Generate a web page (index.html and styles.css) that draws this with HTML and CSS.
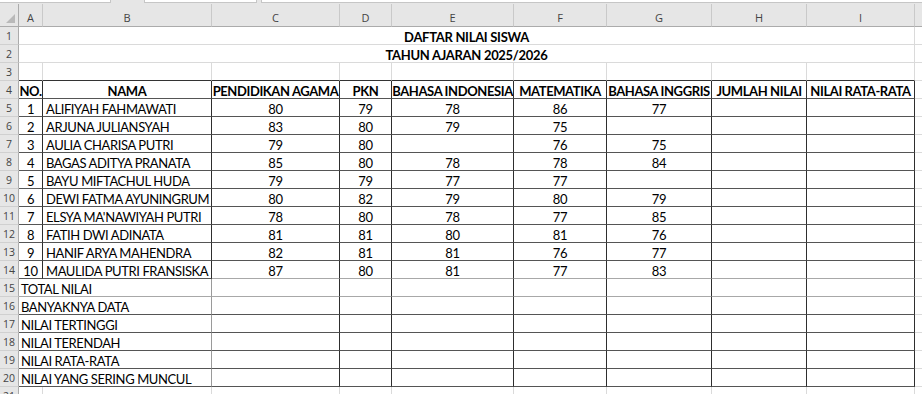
FILE: index.html
```html
<!DOCTYPE html>
<html lang="id">
<head>
<meta charset="utf-8">
<title>Daftar Nilai Siswa</title>
<link rel="stylesheet" href="styles.css">
</head>
<body>
<div class="app">
  <div class="topstrip">
    <div class="box b1"></div>
    <div class="box b2"></div>
    <div class="box b3"></div>
  </div>
  <div class="sheet">
    <!-- column headers -->
    <div class="corner"><span class="tri"></span></div>
    <div class="ch">A</div>
    <div class="ch">B</div>
    <div class="ch">C</div>
    <div class="ch">D</div>
    <div class="ch">E</div>
    <div class="ch">F</div>
    <div class="ch">G</div>
    <div class="ch">H</div>
    <div class="ch">I</div>
    <div class="ch last"></div>

    <!-- row 1 -->
    <div class="rh">1</div>
    <div class="c title span9">DAFTAR NILAI SISWA</div>
    <div class="c"></div>
    <!-- row 2 -->
    <div class="rh">2</div>
    <div class="c title span9">TAHUN AJARAN 2025/2026</div>
    <div class="c"></div>
    <!-- row 3 -->
    <div class="rh">3</div>
    <div class="c top"></div><div class="c top"></div><div class="c top"></div><div class="c top"></div><div class="c top"></div><div class="c top"></div><div class="c top"></div><div class="c top"></div><div class="c top"></div>
    <div class="c"></div>
    <!-- row 4 -->
    <div class="rh">4</div>
    <div class="c t hd">NO.</div>
    <div class="c t hd">NAMA</div>
    <div class="c t hd">PENDIDIKAN AGAMA</div>
    <div class="c t hd">PKN</div>
    <div class="c t hd">BAHASA INDONESIA</div>
    <div class="c t hd">MATEMATIKA</div>
    <div class="c t hd">BAHASA INGGRIS</div>
    <div class="c t hd">JUMLAH NILAI</div>
    <div class="c t hd">NILAI RATA-RATA</div>
    <div class="c"></div>

    <!-- row 5 -->
    <div class="rh">5</div>
    <div class="c t n">1</div><div class="c t nm">ALIFIYAH FAHMAWATI</div>
    <div class="c t n">80</div><div class="c t n">79</div><div class="c t n">78</div><div class="c t n">86</div><div class="c t n">77</div><div class="c t"></div><div class="c t"></div>
    <div class="c"></div>
    <!-- row 6 -->
    <div class="rh">6</div>
    <div class="c t n">2</div><div class="c t nm">ARJUNA JULIANSYAH</div>
    <div class="c t n">83</div><div class="c t n">80</div><div class="c t n">79</div><div class="c t n">75</div><div class="c t n"></div><div class="c t"></div><div class="c t"></div>
    <div class="c"></div>
    <!-- row 7 -->
    <div class="rh">7</div>
    <div class="c t n">3</div><div class="c t nm">AULIA CHARISA PUTRI</div>
    <div class="c t n">79</div><div class="c t n">80</div><div class="c t n"></div><div class="c t n">76</div><div class="c t n">75</div><div class="c t"></div><div class="c t"></div>
    <div class="c"></div>
    <!-- row 8 -->
    <div class="rh">8</div>
    <div class="c t n">4</div><div class="c t nm">BAGAS ADITYA PRANATA</div>
    <div class="c t n">85</div><div class="c t n">80</div><div class="c t n">78</div><div class="c t n">78</div><div class="c t n">84</div><div class="c t"></div><div class="c t"></div>
    <div class="c"></div>
    <!-- row 9 -->
    <div class="rh">9</div>
    <div class="c t n">5</div><div class="c t nm">BAYU MIFTACHUL HUDA</div>
    <div class="c t n">79</div><div class="c t n">79</div><div class="c t n">77</div><div class="c t n">77</div><div class="c t n"></div><div class="c t"></div><div class="c t"></div>
    <div class="c"></div>
    <!-- row 10 -->
    <div class="rh">10</div>
    <div class="c t n">6</div><div class="c t nm">DEWI FATMA AYUNINGRUM</div>
    <div class="c t n">80</div><div class="c t n">82</div><div class="c t n">79</div><div class="c t n">80</div><div class="c t n">79</div><div class="c t"></div><div class="c t"></div>
    <div class="c"></div>
    <!-- row 11 -->
    <div class="rh">11</div>
    <div class="c t n">7</div><div class="c t nm">ELSYA MA'NAWIYAH PUTRI</div>
    <div class="c t n">78</div><div class="c t n">80</div><div class="c t n">78</div><div class="c t n">77</div><div class="c t n">85</div><div class="c t"></div><div class="c t"></div>
    <div class="c"></div>
    <!-- row 12 -->
    <div class="rh">12</div>
    <div class="c t n">8</div><div class="c t nm">FATIH DWI ADINATA</div>
    <div class="c t n">81</div><div class="c t n">81</div><div class="c t n">80</div><div class="c t n">81</div><div class="c t n">76</div><div class="c t"></div><div class="c t"></div>
    <div class="c"></div>
    <!-- row 13 -->
    <div class="rh">13</div>
    <div class="c t n">9</div><div class="c t nm">HANIF ARYA MAHENDRA</div>
    <div class="c t n">82</div><div class="c t n">81</div><div class="c t n">81</div><div class="c t n">76</div><div class="c t n">77</div><div class="c t"></div><div class="c t"></div>
    <div class="c"></div>
    <!-- row 14 -->
    <div class="rh">14</div>
    <div class="c t n">10</div><div class="c t nm">MAULIDA PUTRI FRANSISKA</div>
    <div class="c t n soft">87</div><div class="c t n soft">80</div><div class="c t n soft">81</div><div class="c t n soft">77</div><div class="c t n soft">83</div><div class="c t soft"></div><div class="c t soft"></div>
    <div class="c"></div>

    <!-- row 15 -->
    <div class="rh">15</div>
    <div class="c t lbl span2 soft">TOTAL NILAI</div>
    <div class="c t soft"></div><div class="c t soft"></div><div class="c t soft"></div><div class="c t soft"></div><div class="c t soft"></div><div class="c t soft"></div><div class="c t soft"></div>
    <div class="c"></div>
    <!-- row 16 -->
    <div class="rh">16</div>
    <div class="c t lbl span2">BANYAKNYA DATA</div>
    <div class="c t"></div><div class="c t"></div><div class="c t"></div><div class="c t"></div><div class="c t"></div><div class="c t"></div><div class="c t"></div>
    <div class="c"></div>
    <!-- row 17 -->
    <div class="rh">17</div>
    <div class="c t lbl span2">NILAI TERTINGGI</div>
    <div class="c t"></div><div class="c t"></div><div class="c t"></div><div class="c t"></div><div class="c t"></div><div class="c t"></div><div class="c t"></div>
    <div class="c"></div>
    <!-- row 18 -->
    <div class="rh">18</div>
    <div class="c t lbl span2">NILAI TERENDAH</div>
    <div class="c t"></div><div class="c t"></div><div class="c t"></div><div class="c t"></div><div class="c t"></div><div class="c t"></div><div class="c t"></div>
    <div class="c"></div>
    <!-- row 19 -->
    <div class="rh">19</div>
    <div class="c t lbl span2">NILAI RATA-RATA</div>
    <div class="c t"></div><div class="c t"></div><div class="c t"></div><div class="c t"></div><div class="c t"></div><div class="c t"></div><div class="c t"></div>
    <div class="c"></div>
    <!-- row 20 -->
    <div class="rh">20</div>
    <div class="c t lbl span2">NILAI YANG SERING MUNCUL</div>
    <div class="c t"></div><div class="c t"></div><div class="c t"></div><div class="c t"></div><div class="c t"></div><div class="c t"></div><div class="c t"></div>
    <div class="c"></div>
    <!-- row 21 -->
    <div class="rh">21</div>
    <div class="c"></div><div class="c"></div><div class="c"></div><div class="c"></div><div class="c"></div><div class="c"></div><div class="c"></div><div class="c"></div><div class="c"></div>
    <div class="c"></div>
  </div>
</div>
</body>
</html>
```

FILE: styles.css
```css
html, body {
  margin: 0;
  padding: 0;
  background: #ffffff;
  overflow: hidden;
}

.app {
  width: 922px;
  height: 394px;
  overflow: hidden;
  font-family: "Lato", "Liberation Sans", sans-serif;
  color: #000;
}

.topstrip {
  height: 4px;
  background: #e6e6e6;
  display: flex;
  gap: 0;
}

.box {
  height: 2px;
  background: #ffffff;
  border-bottom: 1px solid #c6c6c6;
}
.b1 { width: 110px; border-right: 1px solid #c6c6c6; }
.b2 { width: 111px; margin-left: 33px; border-left: 1px solid #c6c6c6; border-right: 1px solid #c6c6c6; }
.b3 { flex: 1; margin-left: 4px; border-left: 1px solid #c6c6c6; }

.sheet {
  display: grid;
  grid-template-columns: 19px 24px 169px 128px 52px 122px 93px 105px 95px 108px 60px;
  grid-template-rows: 23px repeat(21, 18px);
  width: 975px;
}

.sheet > div {
  box-sizing: border-box;
  overflow: hidden;
  white-space: nowrap;
}

/* headers */
.corner {
  background: #e6e6e6;
  border-right: 1px solid #ababab;
  border-bottom: 1px solid #ababab;
  position: relative;
}
.tri {
  position: absolute;
  right: 3px;
  bottom: 3px;
  width: 0;
  height: 0;
  border-left: 9px solid transparent;
  border-bottom: 9px solid #b9b9b9;
}

.ch {
  background: #e6e6e6;
  border-right: 1px solid #c9c9c9;
  border-bottom: 1px solid #ababab;
  font-family: "Open Sans", "Liberation Sans", sans-serif;
  font-size: 11px;
  color: #444;
  text-align: center;
  line-height: 16px;
  padding-top: 6px;
}
.ch.last { border-right: none; }

.rh {
  background: #e6e6e6;
  border-right: 1px solid #ababab;
  border-bottom: 1px solid #d0d0d0;
  font-family: "Open Sans", "Liberation Sans", sans-serif;
  font-size: 10.5px;
  color: #444;
  text-align: center;
  line-height: 18px;
}

/* cells */
.c {
  border-right: 1px solid #dadada;
  border-bottom: 1px solid #dadada;
  font-size: 13px;
  letter-spacing: -0.4px;
  line-height: 18px;
  padding-top: 1px;
}

.top { border-bottom-color: #333; }

.t {
  border-right-color: #2e2e2e;
  border-bottom-color: #555;
}
.t.soft { border-bottom-color: #a8a8a8; }

.title {
  font-weight: 700;
  text-align: center;
  letter-spacing: -0.3px;
}
.span9 { grid-column: span 9; }
.span2 { grid-column: span 2; }

.hd {
  font-weight: 700;
  text-align: center;
}

.n { text-align: center; }
.nm { padding-left: 3px; }
.lbl { padding-left: 2px; border-right-color: #9a9a9a; }
```
